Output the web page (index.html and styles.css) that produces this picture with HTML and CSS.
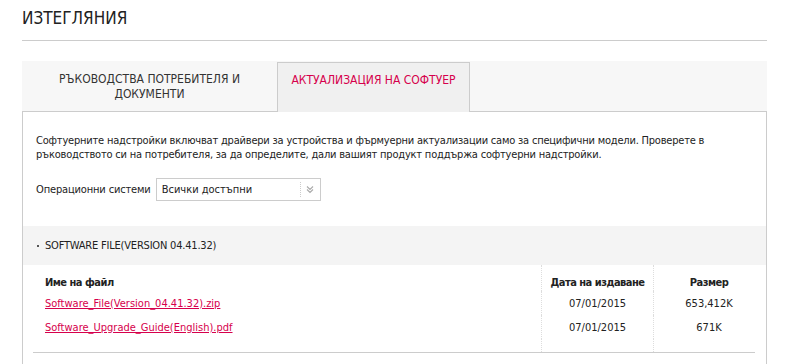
FILE: index.html
```html
<!DOCTYPE html>
<html lang="bg">
<head>
  <meta charset="UTF-8">
  <title>Изтегляния</title>
  <link rel="stylesheet" href="styles.css">
</head>
<body>
  <div class="page">
    <h1 class="title">ИЗТЕГЛЯНИЯ</h1>

    <div class="tabs">
      <div class="tab">РЪКОВОДСТВА ПОТРЕБИТЕЛЯ И<br>ДОКУМЕНТИ</div>
      <div class="tab active">АКТУАЛИЗАЦИЯ НА СОФТУЕР</div>
    </div>

    <div class="panel">
      <p class="intro">Софтуерните надстройки включват драйвери за устройства и фърмуерни актуализации само за специфични модели. Проверете в ръководството си на потребителя, за да определите, дали вашият продукт поддържа софтуерни надстройки.</p>

      <div class="filter">
        <label class="filter-label">Операционни системи</label>
        <div class="select">
          <span class="select-value">Всички достъпни</span>
          <span class="select-arrow">
            <svg width="8" height="9" viewBox="0 0 8 9"><path d="M1 1.5 4 4.5 7 1.5M1 4.5 4 7.5 7 4.5" fill="none" stroke="#aaa" stroke-width="1.1"/></svg>
          </span>
        </div>
      </div>

      <div class="section-head"><span class="bullet"></span>SOFTWARE FILE(VERSION 04.41.32)</div>

      <table class="files">
        <thead>
          <tr>
            <th class="col-name">Име на файл</th>
            <th class="col-date">Дата на издаване</th>
            <th class="col-size">Размер</th>
          </tr>
        </thead>
        <tbody>
          <tr>
            <td class="col-name"><a href="#">Software_File(Version_04.41.32).zip</a></td>
            <td class="col-date">07/01/2015</td>
            <td class="col-size">653,412K</td>
          </tr>
          <tr>
            <td class="col-name"><a href="#">Software_Upgrade_Guide(English).pdf</a></td>
            <td class="col-date">07/01/2015</td>
            <td class="col-size">671K</td>
          </tr>
          <tr class="spacer">
            <td class="col-name"></td>
            <td class="col-date"></td>
            <td class="col-size"></td>
          </tr>
        </tbody>
      </table>
    </div>
  </div>
</body>
</html>
```

FILE: styles.css
```css
body {
  margin: 0;
  background: #fff;
  font-family: "DejaVu Sans Condensed", "DejaVu Sans", sans-serif;
  font-size: 11px;
  color: #222;
}
.page {
  padding: 0 20px 0 22px;
}
.title {
  margin: 0;
  padding: 8px 0 11px;
  font-size: 17px;
  font-weight: normal;
  color: #222;
  border-bottom: 1px solid #ccc;
  line-height: 21px;
}
.tabs {
  display: flex;
  margin-top: 20px;
  background: #f7f7f7;
  height: 51px;
  align-items: flex-end;
}
.tab {
  box-sizing: border-box;
  height: 51px;
  width: 255px;
  padding-top: 11px;
  text-align: center;
  font-size: 12px;
  line-height: 15px;
  color: #333;
  border-bottom: 1px solid #ccc;
}
.tab.active {
  width: 193px;
  height: 50px;
  padding-top: 10px;
  background: #f0f0f0;
  color: #d6004c;
  border: 1px solid #ccc;
  border-bottom: none;
}
.tabs::after {
  content: "";
  flex: 1;
  align-self: flex-end;
  border-bottom: 1px solid #ccc;
}
.panel {
  border: 1px solid #ccc;
  border-top: none;
  padding-top: 22px;
  padding-bottom: 20px;
}
.intro {
  margin: 0 0 0 13px;
  line-height: 14px;
  letter-spacing: -0.2px;
  color: #222;
  padding-right: 40px;
}
.filter {
  display: flex;
  align-items: center;
  margin: 16px 0 0 13px;
}
.filter-label {
  margin-right: 5px;
  letter-spacing: -0.15px;
}
.select {
  box-sizing: border-box;
  display: flex;
  align-items: center;
  width: 165px;
  height: 23px;
  border: 1px solid #ccc;
}
.select-value {
  flex: 1;
  padding-left: 5px;
}
.select-arrow {
  display: flex;
  align-items: center;
  justify-content: center;
  width: 19px;
  height: 15px;
  border-left: 1px dotted #ccc;
}
.section-head {
  display: flex;
  align-items: center;
  margin-top: 25px;
  height: 39px;
  padding-left: 14px;
  background: #f4f4f4;
  color: #222;
  letter-spacing: -0.2px;
}
.bullet {
  width: 2px;
  height: 2px;
  background: #555;
  margin-right: 6px;
}
.files {
  border-collapse: collapse;
  margin: 0 10px;
  width: calc(100% - 21px);
  border-bottom: 1px solid #ccc;
}
.files th, .files td {
  padding: 0;
  height: 24px;
  vertical-align: middle;
}
.files th {
  box-sizing: border-box;
  height: 26px;
  padding-top: 10px;
  vertical-align: top;
  font-weight: bold;
  line-height: 16px;
  letter-spacing: -0.5px;
}
.files .spacer td {
  height: 13px;
}
.col-name {
  text-align: left;
  padding-left: 12px !important;
}
.col-date {
  width: 111px;
  text-align: center;
  border-left: 1px dotted #ddd;
}
.col-size {
  width: 92px;
  text-align: center;
  border-left: 1px dotted #ddd;
}
.files .col-size {
  padding-left: 9px;
}
.files a {
  color: #d6004c;
}
```
